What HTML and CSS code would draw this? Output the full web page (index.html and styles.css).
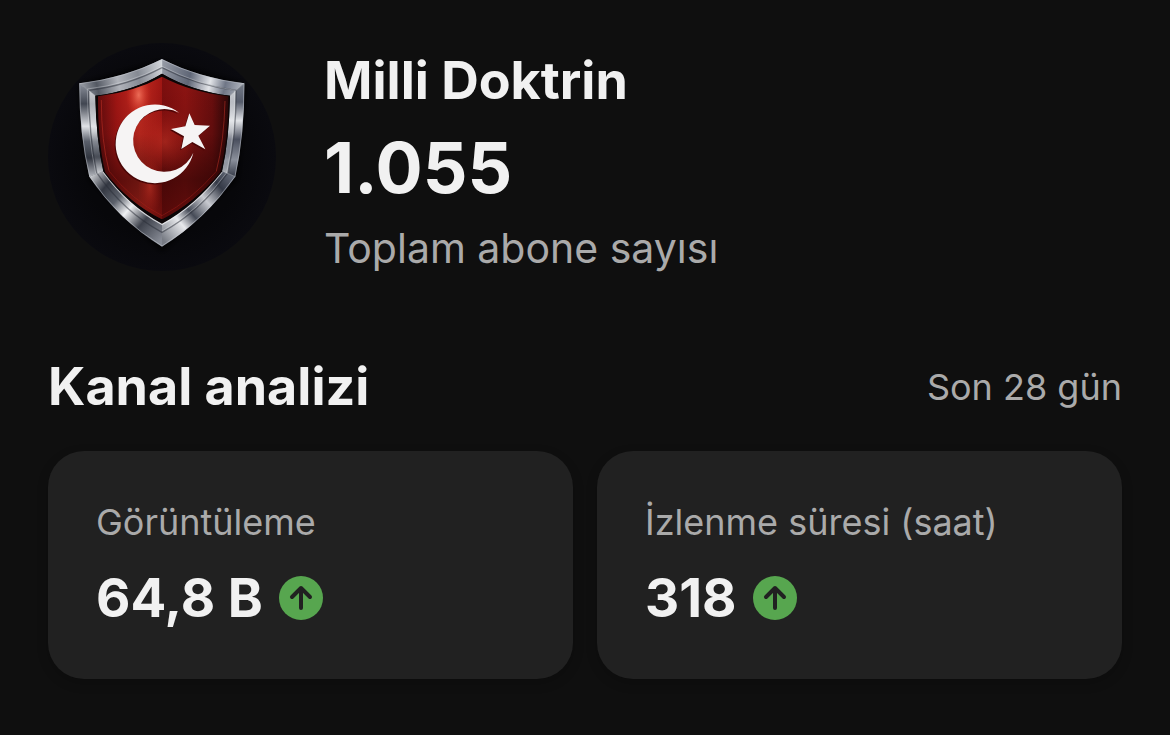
FILE: index.html
```html
<!DOCTYPE html>
<html lang="tr">

<head>
    <meta charset="UTF-8">
    <meta name="viewport" content="width=device-width, initial-scale=1.0">
    <title>Milli Doktrin - Kanal analizi</title>
    <link rel="stylesheet" href="styles.css">
</head>

<body>
    <main class="dashboard">
        <header class="channel">
            <svg class="avatar" viewBox="24 24 684 684" role="img" aria-label="Milli Doktrin">
                <defs>
                    <radialGradient id="backdrop">
                        <stop offset="0" stop-color="#07070b" />
                        <stop offset="0.7" stop-color="#07070a" />
                        <stop offset="1" stop-color="#0a0a0f" />
                    </radialGradient>
                    <linearGradient id="topLeft" x1="118" y1="150" x2="366" y2="90" gradientUnits="userSpaceOnUse">
                        <stop offset="0" stop-color="#9ea2aa" />
                        <stop offset="0.2" stop-color="#545963" />
                        <stop offset="0.45" stop-color="#b0b3ba" />
                        <stop offset="0.7" stop-color="#858a93" />
                        <stop offset="1" stop-color="#d3d6db" />
                    </linearGradient>
                    <linearGradient id="topRight" x1="366" y1="90" x2="613" y2="150" gradientUnits="userSpaceOnUse">
                        <stop offset="0" stop-color="#959aa5" />
                        <stop offset="0.35" stop-color="#5f6676" />
                        <stop offset="0.6" stop-color="#e2e4e8" />
                        <stop offset="0.78" stop-color="#6f7686" />
                        <stop offset="1" stop-color="#b5b9c2" />
                    </linearGradient>
                    <linearGradient id="sideLeft" x1="0" y1="145" x2="0" y2="425" gradientUnits="userSpaceOnUse">
                        <stop offset="0" stop-color="#8d929d" />
                        <stop offset="0.22" stop-color="#414651" />
                        <stop offset="0.46" stop-color="#e0e2e6" />
                        <stop offset="0.62" stop-color="#5b606b" />
                        <stop offset="0.8" stop-color="#31353f" />
                        <stop offset="1" stop-color="#b2b5bc" />
                    </linearGradient>
                    <linearGradient id="sideRight" x1="0" y1="145" x2="0" y2="425" gradientUnits="userSpaceOnUse">
                        <stop offset="0" stop-color="#757b88" />
                        <stop offset="0.2" stop-color="#555b6a" />
                        <stop offset="0.4" stop-color="#e2e4e8" />
                        <stop offset="0.6" stop-color="#4a4f5e" />
                        <stop offset="0.82" stop-color="#8b909b" />
                        <stop offset="1" stop-color="#363b48" />
                    </linearGradient>
                    <linearGradient id="bottomLeft" x1="150" y1="420" x2="366" y2="610" gradientUnits="userSpaceOnUse">
                        <stop offset="0" stop-color="#d4d6da" />
                        <stop offset="0.2" stop-color="#343842" />
                        <stop offset="0.38" stop-color="#5c616b" />
                        <stop offset="0.54" stop-color="#f0f1f3" />
                        <stop offset="0.74" stop-color="#3d414b" />
                        <stop offset="1" stop-color="#858993" />
                    </linearGradient>
                    <linearGradient id="bottomRight" x1="366" y1="610" x2="586" y2="420" gradientUnits="userSpaceOnUse">
                        <stop offset="0" stop-color="#777b84" />
                        <stop offset="0.25" stop-color="#e8e9ec" />
                        <stop offset="0.4" stop-color="#464b57" />
                        <stop offset="0.6" stop-color="#c8cad0" />
                        <stop offset="0.8" stop-color="#343946" />
                        <stop offset="1" stop-color="#6c7280" />
                    </linearGradient>
                    <linearGradient id="innerSide" x1="0" y1="170" x2="0" y2="412" gradientUnits="userSpaceOnUse">
                        <stop offset="0" stop-color="#e6e8eb" stop-opacity="0.75" />
                        <stop offset="0.5" stop-color="#e6e8eb" stop-opacity="0.5" />
                        <stop offset="0.8" stop-color="#9a9fa8" stop-opacity="0.2" />
                        <stop offset="1" stop-color="#e6e8eb" stop-opacity="0.6" />
                    </linearGradient>
                    <linearGradient id="redLeft" x1="172" y1="0" x2="366" y2="0" gradientUnits="userSpaceOnUse">
                        <stop offset="0" stop-color="#610c0d" />
                        <stop offset="0.3" stop-color="#a31614" />
                        <stop offset="0.65" stop-color="#c42a20" />
                        <stop offset="1" stop-color="#a01613" />
                    </linearGradient>
                    <linearGradient id="redRight" x1="366" y1="0" x2="567" y2="0" gradientUnits="userSpaceOnUse">
                        <stop offset="0" stop-color="#7d0e0e" />
                        <stop offset="0.35" stop-color="#8d1412" />
                        <stop offset="0.75" stop-color="#6b0e0e" />
                        <stop offset="1" stop-color="#2a0708" />
                    </linearGradient>
                    <linearGradient id="redShade" x1="0" y1="125" x2="0" y2="553" gradientUnits="userSpaceOnUse">
                        <stop offset="0" stop-color="#000" stop-opacity="0" />
                        <stop offset="0.4" stop-color="#000" stop-opacity="0.1" />
                        <stop offset="0.72" stop-color="#120000" stop-opacity="0.5" />
                        <stop offset="1" stop-color="#120000" stop-opacity="0.35" />
                    </linearGradient>
                    <radialGradient id="glow">
                        <stop offset="0" stop-color="#ff8a70" stop-opacity="0.7" />
                        <stop offset="1" stop-color="#e03020" stop-opacity="0" />
                    </radialGradient>
                    <radialGradient id="lowGlow">
                        <stop offset="0" stop-color="#d83a2a" stop-opacity="0.5" />
                        <stop offset="1" stop-color="#c02018" stop-opacity="0" />
                    </radialGradient>
                    <clipPath id="redClip">
                        <path d="M366 125Q285 170 174 184Q173 320 196 412Q268 505 366 553Q462 505 540 412Q564 320 566 184Q450 170 366 125Z" />
                    </clipPath>
                    <filter id="shadow" x="-20%" y="-20%" width="140%" height="140%">
                        <feGaussianBlur stdDeviation="9" />
                    </filter>
                </defs>
                <circle cx="366" cy="366" r="342" fill="url(#backdrop)" />
                <path d="M366 80L118 150L148 432L366 648L590 432L617 150Z" fill="#000" filter="url(#shadow)" />

                <!-- metal frame -->
                <path d="M366 72Q255 128 118 145L166 182Q280 168 366 116Z" fill="url(#topLeft)" />
                <path d="M366 72Q475 128 613 145L570 182Q455 168 366 116Z" fill="url(#topRight)" />
                <path d="M118 145Q118 300 148 425L190 408Q168 310 166 182Z" fill="url(#sideLeft)" />
                <path d="M613 145Q613 300 586 425L546 408Q568 310 570 182Z" fill="url(#sideRight)" />
                <path d="M148 425Q235 555 366 635V564Q265 510 190 408Z" fill="url(#bottomLeft)" />
                <path d="M586 425Q495 555 366 635V564Q465 510 546 408Z" fill="url(#bottomRight)" />
                <path d="M146 166Q147 300 170 416L190 408Q168 310 166 182ZM588 166Q589 300 564 416L546 408Q568 310 570 182Z" fill="url(#innerSide)" />
                <path d="M366 98Q265 152 146 166Q147 300 170 413Q250 530 366 592Q480 530 564 413Q589 300 588 166Q470 152 366 98Z" fill="none" stroke="#272b35" stroke-opacity="0.5" stroke-width="4" />
                <path d="M366 94Q265 148 142 162Q143 300 167 414M366 588Q480 526 560 413Q585 300 584 166Q470 148 366 94" fill="none" stroke="#e4e6ea" stroke-opacity="0.5" stroke-width="2" />
                <path d="M366 74Q255 130 119 146Q119 300 149 424Q235 554 366 633Q495 554 585 424Q612 300 612 146Q475 130 366 74Z" fill="none" stroke="#c8ccd4" stroke-opacity="0.5" stroke-width="3" />
                <path d="M118 145L166 182M613 145L570 182M148 425L190 408M586 425L546 408M366 72V116" fill="none" stroke="#d5d8de" stroke-opacity="0.6" stroke-width="2" />
                <path d="M190 410Q265 513 366 568Q465 513 546 410" fill="none" stroke="#eceef0" stroke-opacity="0.8" stroke-width="5" />

                <!-- red field -->
                <path d="M366 116Q280 168 166 182Q168 310 190 410Q265 512 366 566Q465 512 546 410Q568 310 570 182Q455 168 366 116Z" fill="#0b0506" />
                <g clip-path="url(#redClip)">
                    <rect x="166" y="116" width="200" height="450" fill="url(#redLeft)" />
                    <rect x="366" y="116" width="204" height="450" fill="url(#redRight)" />
                    <rect x="166" y="116" width="404" height="450" fill="url(#redShade)" />
                    <ellipse cx="296" cy="180" rx="38" ry="70" fill="url(#glow)" />
                    <ellipse cx="330" cy="455" rx="36" ry="90" fill="url(#lowGlow)" />
                    <ellipse cx="375" cy="320" rx="90" ry="110" fill="url(#lowGlow)" />
                    <path d="M184 195Q184 320 207 407M555 198Q552 320 529 408" fill="none" stroke="#c93428" stroke-opacity="0.5" stroke-width="3" />
                    <path d="M207 408Q275 495 366 542Q455 495 530 408" fill="none" stroke="#b0241c" stroke-opacity="0.4" stroke-width="3" />
                </g>

                <!-- crescent and star -->
                <g fill="#4a0606" transform="translate(-3 4)">
                    <path d="M417 233A118 118 0 1 0 460 353A94 94 0 1 1 417 233Z" />
                    <path d="M448 235L464 270L510 272L475 302L496 343L457 321L424 342L432 304L393 282L436 274Z" />
                </g>
                <g fill="#f6f4f4">
                    <path d="M417 233A118 118 0 1 0 460 353A94 94 0 1 1 417 233Z" />
                    <path d="M448 235L464 270L510 272L475 302L496 343L457 321L424 342L432 304L393 282L436 274Z" />
                </g>
            </svg>
            <div class="channel-info">
                <h1 class="channel-name">Milli Doktrin</h1>
                <p class="subscriber-count">1.055</p>
                <p class="subscriber-label">Toplam abone sayısı</p>
            </div>
        </header>

        <section class="analytics">
            <div class="analytics-header">
                <h2 class="analytics-title">Kanal analizi</h2>
                <span class="period">Son 28 gün</span>
            </div>
            <div class="cards">
                <div class="card">
                    <p class="card-label">Görüntüleme</p>
                    <p class="card-value">
                        64,8 B
                        <svg class="trend" viewBox="0 0 44 44" aria-hidden="true">
                            <circle cx="22" cy="22" r="22" />
                            <path d="M22 32V12M13 21L22 12L31 21" />
                        </svg>
                    </p>
                </div>
                <div class="card">
                    <p class="card-label">İzlenme süresi (saat)</p>
                    <p class="card-value">
                        318
                        <svg class="trend" viewBox="0 0 44 44" aria-hidden="true">
                            <circle cx="22" cy="22" r="22" />
                            <path d="M22 32V12M13 21L22 12L31 21" />
                        </svg>
                    </p>
                </div>
            </div>
        </section>
    </main>
</body>

</html>
```

FILE: styles.css
```css
* {
    box-sizing: border-box;
    margin: 0;
    padding: 0;
}

body {
    background-color: #0f0f0f;
    color: #f1f1f1;
    font-family: Inter, "Liberation Sans", sans-serif;
}

.dashboard {
    padding: 43px 48px;
}

.channel {
    display: flex;
    align-items: flex-start;
    gap: 48px;
}

.avatar {
    flex-shrink: 0;
    width: 228px;
    height: 228px;
}

.channel-info {
    display: flex;
    flex-direction: column;
    gap: 12px;
    padding-top: 6px;
}

.channel-name,
.analytics-title {
    font-size: 52px;
    font-weight: 700;
    line-height: 64px;
}

.subscriber-count {
    font-size: 70px;
    font-weight: 700;
    line-height: 86px;
}

.subscriber-label {
    color: #aaa;
    font-size: 41px;
    line-height: 50px;
}

.analytics {
    margin-top: 82px;
}

.analytics-header {
    display: flex;
    justify-content: space-between;
    align-items: center;
    margin-bottom: 32px;
}

.period,
.card-label {
    color: #aaa;
    font-size: 36px;
    line-height: 46px;
}

.cards {
    display: grid;
    grid-template-columns: 1fr 1fr;
    gap: 24px;
}

.card {
    display: flex;
    flex-direction: column;
    gap: 20px;
    padding: 48px;
    background-color: #212121;
    border-radius: 36px;
    box-shadow: 0 4px 12px rgba(0, 0, 0, 0.2);
}

.card-value {
    display: flex;
    align-items: center;
    gap: 16px;
    font-size: 53px;
    font-weight: 700;
    line-height: 66px;
}

.trend {
    width: 44px;
    height: 44px;
}

.trend circle {
    fill: #57a64f;
}

.trend path {
    fill: none;
    stroke: #212121;
    stroke-width: 4;
    stroke-linecap: round;
    stroke-linejoin: round;
}
```
